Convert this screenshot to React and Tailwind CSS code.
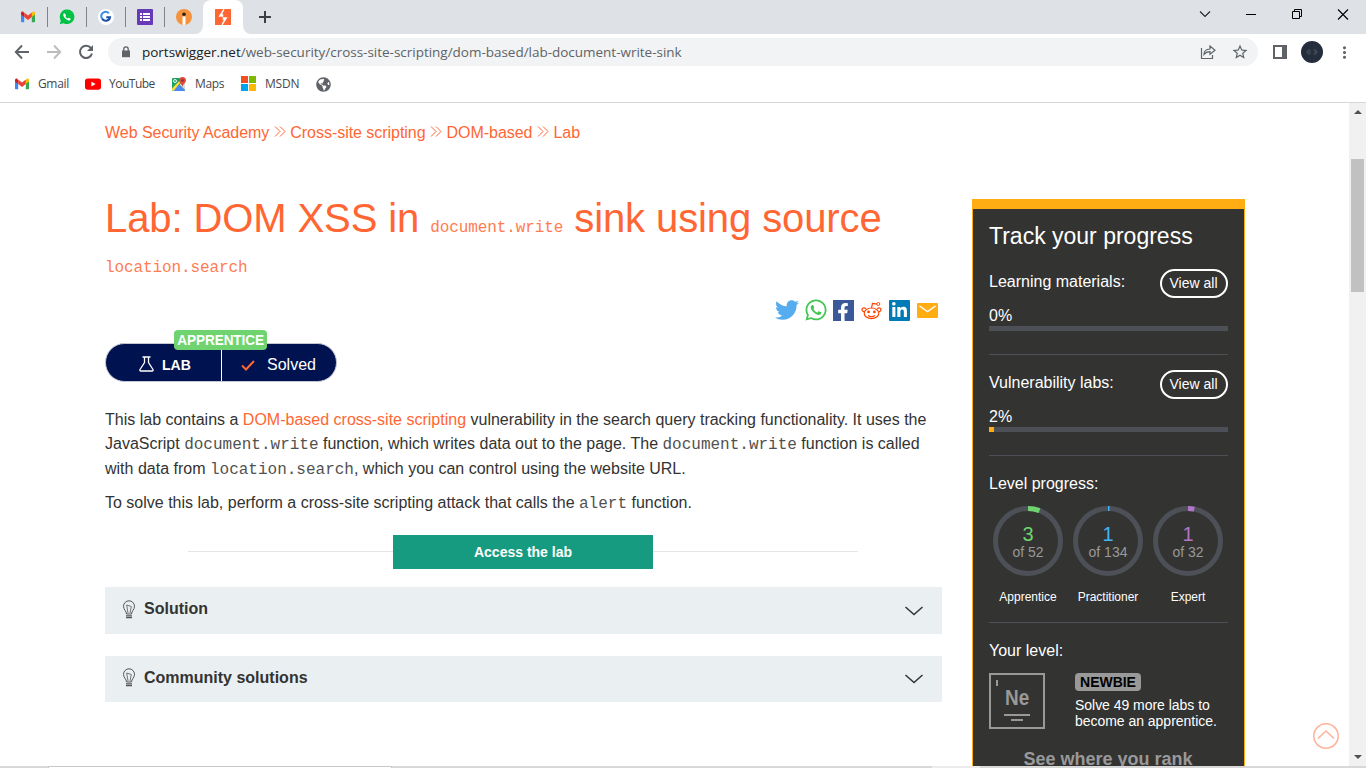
import React from "react";
import { MdMoreVert, MdStarBorder } from "react-icons/md";
import { FaTwitter, FaWhatsapp, FaLinkedinIn, FaFacebookF, FaGlobeAmericas } from "react-icons/fa";

const Gmail = () => (
  <svg width="16" height="16" viewBox="0 0 16 16">
    <path d="M1 4v8.2c0 .6.4 1 1 1h2.200V7z" fill="#4285f4" />
    <path d="M15 4v8.200c0 .6-.4 1-1 1h-2.200V7z" fill="#34a853" />
    <path d="M11.800 4.500V8L15 5.600V4.200c0-1.500-1.500-2-2.500-1.200z" fill="#fbbc04" />
    <path d="M4.200 4.500V8L1 5.600V4.200C1 2.700 2.500 2.200 3.500 3z" fill="#c5221f" />
    <path d="M4.200 3.500L8 6.400l3.800-2.900V8L8 10.900 4.200 8z" fill="#ea4335" />
  </svg>
);

const WhatsAppTab = () => (
  <svg width="16" height="16" viewBox="0 0 16 16">
    <path d="M.8 15.200l1-3.700A7.300 7.300 0 1 1 4.600 14.200z" fill="#00c244" />
    <path d="M5.600 4.200c-.4-.1-1 .2-1.200.9-.5 1.300.3 2.900 1.600 4.200 1.500 1.500 3.400 2.500 4.800 1.900.7-.3 1-.9.9-1.500l-1.900-1c-.4.300-.6.9-1 .8-1.100-.400-2-1.300-2.400-2.300.2-.400.7-.6.7-1z" fill="#fff" />
  </svg>
);

const GTab = () => (
  <svg width="16" height="16" viewBox="0 0 16 16">
    <circle cx="8" cy="8" r="8" fill="#fff" />
    <path d="M10.800 4.300A4.300 4.300 0 0 0 4 9.500" fill="none" stroke="#3b8ee8" strokeWidth="2" />
    <path d="M4 9.500A4.300 4.300 0 0 0 12 8.200H8.300" fill="none" stroke="#1a4fa8" strokeWidth="2" />
  </svg>
);

const FormsTab = () => (
  <svg width="16" height="16" viewBox="0 0 16 16">
    <rect width="16" height="16" rx="1" fill="#673ab7" />
    <path d="M3 4h2v2H3zM6 4h7v2H6zM3 7h2v2H3zM6 7h7v2H6zM3 10h2v2H3zM6 10h7v2H6z" fill="#fff" />
  </svg>
);

const OrangeTab = () => (
  <svg width="16" height="16" viewBox="0 0 16 16">
    <circle cx="8" cy="8" r="8" fill="#f5923e" />
    <path d="M6.500 7.500h3v8.300h-3z" fill="#fff" />
    <circle cx="8" cy="5.200" r="1.800" fill="#2b2118" />
  </svg>
);

const BurpTab = () => (
  <svg width="16" height="16" viewBox="0 0 16 16">
    <rect width="16" height="16" rx=".5" fill="#ff6633" />
    <path d="M8.300 0L3.500 7.800H8.300V5.200H7L9.200 1.200V0z" fill="#fff" />
    <path d="M7.700 16L12.500 8.200H7.700V10.800H9L6.800 14.800V16z" fill="#fff" />
  </svg>
);

const YouTube = () => (
  <svg width="16" height="16" viewBox="0 0 16 16">
    <rect y="2.400" width="16" height="11.400" rx="2.800" fill="#f00" />
    <path d="M6.400 5.700v4.800l4.200-2.400z" fill="#fff" />
  </svg>
);

const Maps = () => (
  <svg width="16" height="16" viewBox="0 0 16 16">
    <rect x="1" y="2" width="13" height="13" rx="1" fill="#1ea362" />
    <path d="M1.500 15L8 8.500l6 6V15z" fill="#4a89f3" />
    <path d="M1 14V12.500L11 2h2L2.500 15H2z" fill="#ffdc3a" />
    <path d="M8.500 8.500L14 4v10z" fill="#dadce0" />
    <circle cx="4" cy="5" r="1.500" fill="none" stroke="#fff" strokeWidth=".9" />
    <path d="M11.500 1A3.500 3.500 0 0 0 8 4.500c0 2.400 3 3.400 3.500 6.500.500-3.100 3.500-4.100 3.500-6.500A3.500 3.500 0 0 0 11.500 1z" fill="#dd4b3e" />
    <circle cx="11.500" cy="4.400" r="1.200" fill="#822f2b" />
  </svg>
);

const Msdn = () => (
  <svg width="16" height="16" viewBox="0 0 16 16">
    <path d="M0 0h7v7H0z" fill="#f25022" />
    <path d="M8 0h7v7H8z" fill="#7fba00" />
    <path d="M0 8h7v7H0z" fill="#00a4ef" />
    <path d="M8 8h7v7H8z" fill="#ffb900" />
  </svg>
);

const Reddit = () => (
  <svg width="21" height="21" viewBox="0 0 21 21" fill="none" stroke="#ff4500" strokeWidth="1.200">
    <ellipse cx="10.500" cy="13.300" rx="7.300" ry="5.300" />
    <path d="M3.300 11.500C1.500 12 .2 9.600 1.700 8.300c1-.8 2.300-.5 3 .6M17.700 11.500c1.800.5 3.100-1.900 1.600-3.200-1-.8-2.300-.5-3 .6M10.500 7.800l1-4.300 4.400.7M7 15.600c1.900 1.300 5.100 1.300 7 0" />
    <circle cx="17.300" cy="4" r="1.500" strokeWidth="1" />
    <circle cx="7.600" cy="11.900" r="1.400" fill="#ff4500" stroke="none" />
    <circle cx="13.400" cy="11.900" r="1.400" fill="#ff4500" stroke="none" />
  </svg>
);

const Bulb = () => (
  <svg width="14" height="19" viewBox="0 0 14 19" fill="none" stroke="#555" strokeWidth="1">
    <path d="M4.500 14C4.500 11 1.500 9.800 1.500 6.300a5.500 5.500 0 0 1 11 0c0 3.500-3 4.700-3 7.700z" />
    <path d="M6 13L4.700 5l4.600 1.500L8 13" strokeWidth=".8" />
    <path d="M4 15.800h6M4 17.600h6" strokeWidth="1.300" />
  </svg>
);

const DoubleChevron = () => (
  <svg className="mx-[4.500px] inline-block align-[1px]" width="12" height="11" viewBox="0 0 12 11" fill="none" stroke="#ff6633" strokeWidth="1">
    <path d="M1 .500l5 5-5 5M6 .500l5 5-5 5" />
  </svg>
);

const Code = ({ children }) => <code className="font-['Liberation_Mono'] text-[16px] leading-none opacity-85">{children}</code>;

function TabStrip() {
  const tabs = [Gmail, WhatsAppTab, GTab, FormsTab, OrangeTab];
  return (
    <div className="flex h-[34px] bg-[#dee1e6]">
      <div className="flex w-[203px] items-center pl-[9px]">
        {tabs.map((Icon, i) => (
          <div key={i} className="flex h-[34px] w-[39px] shrink-0 items-center">
            <div className="flex w-[38px] justify-center"><Icon /></div>
            {i < 4 && <div className="h-5 w-px bg-[#808388]" />}
          </div>
        ))}
      </div>
      <div className="relative flex w-10 items-center justify-center rounded-t-lg bg-white">
        <svg className="absolute -left-2 bottom-0" width="8" height="8"><path d="M8 0v8H0a8 8 0 0 0 8-8z" fill="#fff" /></svg>
        <svg className="absolute -right-2 bottom-0" width="8" height="8"><path d="M0 0v8h8a8 8 0 0 1-8-8z" fill="#fff" /></svg>
        <BurpTab />
      </div>
      <div className="flex w-11 items-center justify-center">
        <svg width="12" height="12" viewBox="0 0 12 12" stroke="#3c4043" strokeWidth="2"><path d="M6 0v12M0 6h12" /></svg>
      </div>
      <div className="ml-auto flex h-7 w-[184px] items-center">
        <svg width="46" height="28" viewBox="0 0 46 28" fill="none" stroke="#222" strokeWidth="1.100"><path d="M18 11.500l5 5 5-5" /></svg>
        <svg width="46" height="28" viewBox="0 0 46 28" fill="none" stroke="#000"><path d="M18 14.500h10" /></svg>
        <svg width="46" height="28" viewBox="0 0 46 28" fill="none" stroke="#000"><path d="M18.500 11.500h7v7h-7zM20.500 11.500v-2h7v7h-2" /></svg>
        <svg width="46" height="28" viewBox="0 0 46 28" fill="none" stroke="#000" strokeWidth="1.100"><path d="M18 9.500l10 10M28 9.500l-10 10" /></svg>
      </div>
    </div>
  );
}

function Toolbar() {
  return (
    <div className="flex h-9 items-center text-[#5f6368]">
      <div className="flex w-[108px] items-center gap-[12px] pl-[12px]">
        <svg width="20" height="20" viewBox="0 0 20 20" fill="none" stroke="#5f6368" strokeWidth="1.900"><path d="M17 10H4M10 3.500L3.800 10l6.200 6.500" /></svg>
        <svg width="20" height="20" viewBox="0 0 20 20" fill="none" stroke="#babcbe" strokeWidth="1.900"><path d="M3 10h13M10 3.500l6.200 6.500-6.200 6.500" /></svg>
        <svg width="20" height="20" viewBox="0 0 20 20" fill="none" stroke="#5f6368" strokeWidth="2"><path d="M15 6.200A6.100 6.100 0 1 0 16 11.500" /><path d="M17 3v6h-6z" fill="#5f6368" stroke="none" /></svg>
      </div>
      <div className="flex h-7 w-[1150px] items-center rounded-full bg-[#f1f3f4] pl-[14px]">
        <svg width="8" height="12" viewBox="0 0 8 12"><path d="M0 4.500h8v6.700H0z" fill="#5f6368" /><path d="M1.800 5V3a2.200 2.200 0 0 1 4.400 0v2" fill="none" stroke="#5f6368" strokeWidth="1.300" /></svg>
        <div className="ml-[12px] font-['Open_Sans'] text-[13.500px] tracking-[-0.02px] whitespace-nowrap">
          <span className="text-[#202124]">portswigger.net</span>/web-security/cross-site-scripting/dom-based/lab-document-write-sink
        </div>
        <svg className="ml-auto" width="16" height="16" viewBox="0 0 16 16" fill="none" stroke="#5f6368" strokeWidth="1.200">
          <path d="M1.500 4v10.500h11V11" />
          <path d="M4 10.500C4 7 6 5.200 10 5V2l5 4.300-5 4V7.700C7 7.700 5.500 8.500 4 10.500z" />
        </svg>
        <MdStarBorder size={18} className="mr-[9px] ml-[15px]" />
      </div>
      <svg className="ml-[15px]" width="14" height="14" viewBox="0 0 14 14">
        <path d="M1 1h12v12H1z" fill="#fff" stroke="#5f6368" strokeWidth="2" />
        <path d="M9 0H14v14H9z" fill="#5f6368" />
      </svg>
      <svg className="ml-[14px]" width="22" height="22" viewBox="0 0 22 22">
        <circle cx="11" cy="11" r="11" fill="#232d3b" />
        <path d="M9.500 9.200a2.200 2.200 0 1 0 0 3.600M12.500 9.200a2.200 2.200 0 1 1 0 3.600M13 11h3M7 11h3" fill="none" stroke="#50565a" />
      </svg>
      <MdMoreVert size={19} className="ml-[12px]" />
    </div>
  );
}

function Bookmarks() {
  return (
    <div className="flex h-[33px] items-center border-b border-[#d6d7d9] pb-[4px] pl-[14px] font-['Open_Sans'] text-[12px] text-[#45484c]">
      <Gmail /><span className="ml-[8px] w-[47px] tracking-[-0.35px]">Gmail</span>
      <YouTube /><span className="ml-[8px] w-[62px] tracking-[-0.5px]">YouTube</span>
      <Maps /><span className="ml-[8px] w-[46px] tracking-[-0.35px]">Maps</span>
      <Msdn /><span className="ml-[8px] w-[51px] tracking-[-0.2px]">MSDN</span>
      <FaGlobeAmericas size={15} className="text-[#5f6368]" />
    </div>
  );
}

function Accordion({ title, className }) {
  return (
    <div className={`flex items-center bg-[#eaeff2] pr-[18px] pl-[17px] ${className}`}>
      <div className="-mt-[3px] flex items-center">
        <Bulb />
        <span className="ml-[8px] text-[16px] font-bold text-[#333332]">{title}</span>
      </div>
      <svg className="ml-auto" width="20" height="10" viewBox="0 0 20 10" fill="none" stroke="#333332" strokeWidth="1.500"><path d="M1.500 1l8.500 7.500L18.500 1" /></svg>
    </div>
  );
}

function ProgressRow({ label, value, percent }) {
  return (
    <div className="h-[101px]">
      <div className="flex h-[29px] justify-between">
        <span className="leading-[26px]">{label}</span>
        <span className="flex h-[29px] w-[68px] items-center justify-center rounded-full border-2 border-white pr-px text-[14px]">View all</span>
      </div>
      <div className="mt-[8px] h-5 leading-[19px]">{value}</div>
      <div className="h-[5px] bg-[#4d5057]">
        <div className="h-[5px] bg-[#ffad12]" style={{ width: `${percent}%` }} />
      </div>
      <div className="mt-[23px] h-px bg-[#4d5057]" />
    </div>
  );
}

function Ring({ value, total, color, label }) {
  const c = 2 * Math.PI * 32.5;
  return (
    <div className="flex w-20 flex-col items-center">
      <div className="grid h-[70px] w-[70px] place-items-center">
        <svg className="col-start-1 row-start-1" width="70" height="70" viewBox="0 0 70 70" fill="none" strokeWidth="5">
          <circle cx="35" cy="35" r="32.500" stroke="#4d5057" />
          <circle cx="35" cy="35" r="32.500" stroke={color} strokeDasharray={`${(c * value) / total} ${c}`} transform="rotate(-90 35 35)" />
        </svg>
        <div className="col-start-1 row-start-1 flex flex-col items-center pt-px">
          <span className="text-[20px] leading-[20px]" style={{ color }}>{value}</span>
          <span className="text-[14px] leading-[16px] text-[#999]">of {total}</span>
        </div>
      </div>
      <div className="mt-[13px] text-[12px] leading-[16px]">{label}</div>
    </div>
  );
}

function ProgressPanel() {
  return (
    <aside className="mt-[96px] ml-[30px] h-[567px] w-[273px] overflow-hidden border-x border-t-[10px] border-[#ffad12] bg-[#333332] px-[16px] text-[16px] text-white">
      <h2 className="mt-[11px] h-[49px] text-[23px] leading-[32px] whitespace-nowrap">Track your progress</h2>
      <ProgressRow label="Learning materials:" value="0%" percent={0} />
      <ProgressRow label="Vulnerability labs:" value="2%" percent={2} />
      <div className="h-[35px] leading-[25px]">Level progress:</div>
      <div className="-ml-px flex h-[116px]">
        <Ring value={3} total={52} color="#6fd36f" label="Apprentice" />
        <Ring value={1} total={134} color="#42b4f5" label="Practitioner" />
        <Ring value={1} total={32} color="#b176c8" label="Expert" />
      </div>
      <div className="h-px bg-[#4d5057]" />
      <div className="mt-[16px] h-[34px] leading-[23px]">Your level:</div>
      <div className="flex">
        <div className="flex h-14 w-14 flex-col items-center border-2 border-[#999]">
          <div className="mt-[5px] ml-[5px] h-[6px] w-[2px] self-start bg-[#999]" />
          <div className="scale-x-[0.860] text-[22px] leading-[24px] font-bold text-[#999]">Ne</div>
          <div className="mt-[4px] h-[2px] w-[26px] bg-[#999]" />
          <div className="mt-[3px] h-[2px] w-[12px] bg-[#999]" />
        </div>
        <div className="ml-[30px] text-[14px] leading-[16px] tracking-[-0.03px] whitespace-nowrap">
          <div className="h-[18px] w-[66px] rounded-[4px] bg-[#999] text-center leading-[18px] font-bold text-black">NEWBIE</div>
          <div className="mt-[6px]">Solve 49 more labs to</div>
          <div>become an apprentice.</div>
        </div>
      </div>
      <div className="mt-[19px] pr-px text-center text-[18px] leading-[22px] font-bold text-[#999]">See where you rank</div>
    </aside>
  );
}

function LabContent() {
  return (
    <main className="ml-[105px] w-[837px] text-[16px] text-[#333332]">
      <nav className="mt-[18px] h-6 leading-6 tracking-[-0.04px] whitespace-nowrap text-[#ff6633]">
        Web Security Academy<DoubleChevron />Cross-site scripting<DoubleChevron />DOM-based<DoubleChevron />Lab
      </nav>
      <h1 className="mt-[53px] h-20 text-[40px] leading-[40px] tracking-[-0.1px] whitespace-nowrap text-[#ff6633]">
        Lab: DOM XSS in <Code>document.write</Code> sink using source
        <br />
        <Code>location.search</Code>
      </h1>
      <div className="mt-[20px] flex h-6 items-center justify-end gap-[7px] pr-[4px]">
        <FaTwitter size={24} color="#55acee" className="-mr-px -ml-px" />
        <FaWhatsapp size={24} className="-mx-[1.500px]" color="#43c553" />
        <div className="flex h-[21px] w-[21px] items-end justify-end bg-[#3b5998] pr-[2px]"><FaFacebookF size={18} color="#fff" /></div>
        <Reddit />
        <div className="flex h-[21px] w-[21px] items-center justify-center rounded-[1px] bg-[#007bb6]"><FaLinkedinIn size={17} color="#fff" /></div>
        <svg width="21" height="15" viewBox="0 0 21 15"><rect width="21" height="15" rx="1" fill="#ffad12" /><path d="M2.500 3l8 5.500 8-5.500" fill="none" stroke="#fff" strokeWidth="1.500" /></svg>
      </div>
      <div className="relative mt-[21px] flex h-[39px] w-[232px] items-center rounded-full border border-[#c4c8d2] bg-[#00124f] text-white">
        <div className="flex h-full w-[115px] items-center pt-[5px] pl-[33px]">
          <svg width="15" height="16" viewBox="0 0 15 16" fill="none" stroke="#fff" strokeWidth="1.300" className="-mt-[2px]"><path d="M3.500 1h8M5.500 1v5.500L1 13.500c-.4.700 0 1.500.8 1.500h11.400c.8 0 1.200-.8.8-1.500L9.500 6.500V1" /></svg>
          <span className="ml-[8px] text-[14px] font-bold">LAB</span>
        </div>
        <div className="h-full w-px bg-white" />
        <div className="flex h-full items-center pt-[5px] pl-[19px]">
          <svg width="14" height="11" viewBox="0 0 14 11" fill="none" stroke="#ff6633" strokeWidth="2"><path d="M1 5.500l4 4L13 1" /></svg>
          <span className="ml-[12px] text-[16px]">Solved</span>
        </div>
        <div className="absolute -top-[14px] left-[68px] h-5 w-[93px] rounded-[4px] bg-[#6fd36f] text-center text-[14px] leading-[21px] font-bold tracking-[-0.55px]">
          <span className="inline-block scale-x-[0.970] tracking-[-0.1px]">APPRENTICE</span>
        </div>
      </div>
      <p className="mt-[25.500px] leading-[24.500px] whitespace-nowrap">
        This lab contains a <span className="text-[#ff6633]">DOM-based cross-site scripting</span> vulnerability in the search query tracking functionality. It uses the
        <br />
        JavaScript <Code>document.write</Code> function, which writes data out to the page. The <Code>document.write</Code> function is called
        <br />
        with data from <Code>location.search</Code>, which you can control using the website URL.
      </p>
      <p className="mt-[9.500px] leading-[24.500px] whitespace-nowrap">
        To solve this lab, perform a cross-site scripting attack that calls the <Code>alert</Code> function.
      </p>
      <div className="mt-[20px] ml-[83px] flex w-[670px] items-center">
        <div className="-mt-px h-px flex-1 bg-[#e5e5e5]" />
        <div className="h-[34px] w-[260px] bg-[#179b80] text-center text-[14px] leading-[35px] font-bold text-white">Access the lab</div>
        <div className="-mt-px h-px flex-1 bg-[#e5e5e5]" />
      </div>
      <Accordion title="Solution" className="mt-[18px] h-[47px]" />
      <Accordion title="Community solutions" className="mt-[22px] h-[46px]" />
    </main>
  );
}

export default function App() {
  return (
    <div className="flex h-[768px] w-[1366px] flex-col overflow-hidden bg-white font-['Liberation_Sans']">
      <TabStrip />
      <Toolbar />
      <Bookmarks />
      <div className="flex h-[663px] items-start">
        <LabContent />
        <ProgressPanel />
        <div className="ml-auto flex h-[663px] items-end pr-[10px] pb-[16px]">
          <svg width="26" height="28" viewBox="0 0 26 28" fill="none" stroke="#ffb199" strokeWidth="1.500"><circle cx="13" cy="14" r="12.200" /><path d="M5 16.500l8-7.500 8 7.500" /></svg>
        </div>
        <div className="flex h-[663px] w-[17px] flex-col items-center bg-[#f1f1f1]">
          <svg className="mt-[7px]" width="8" height="4"><path d="M0 4l4-4 4 4z" fill="#505050" /></svg>
          <div className="mt-[45px] h-[133px] w-[13px] bg-[#c1c1c1]" />
          <svg className="mt-auto mb-[7px]" width="8" height="4"><path d="M0 0l4 4 4-4z" fill="#505050" /></svg>
        </div>
      </div>
      <div className="flex h-[2px]">
        <div className="w-12 bg-[#d8d8d8]" />
        <div className="w-[344px] border-x border-t border-[#c8c8c8] bg-white" />
        <div className="w-[540px] bg-[#d8d8d8]" />
        <div className="w-12 bg-[#ececec]" />
        <div className="flex-1 bg-[#d8d8d8]" />
      </div>
    </div>
  );
}
